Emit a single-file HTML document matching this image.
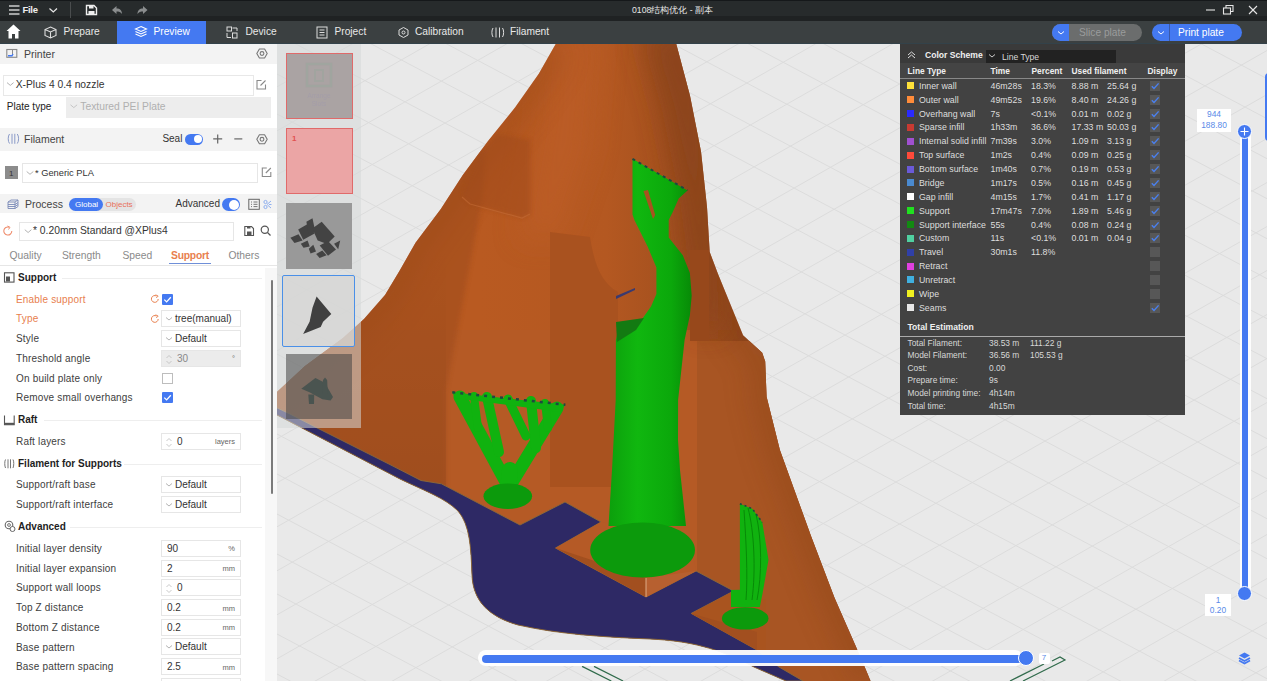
<!DOCTYPE html>
<html><head><meta charset="utf-8">
<style>
*{box-sizing:border-box;margin:0;padding:0}
html,body{width:1267px;height:681px;overflow:hidden;background:#e9e9e9;font-family:"Liberation Sans",sans-serif;}
.a{position:absolute}
#top{left:0;top:0;width:1267px;height:21px;background:linear-gradient(#15181a 0,#15181a 1px,#272b2c 1px,#272b2c 16px,#1f2223 16px)}
#nav{left:0;top:21px;width:1267px;height:23px;background:linear-gradient(#3b4041 0,#3b4041 22px,#33424a 22px)}
.nt{position:absolute;top:-1px;height:24px;line-height:24px;color:#e8e8e8;font-size:10.2px;white-space:nowrap}
#left{left:0;top:44px;width:277px;height:637px;background:#fff;overflow:hidden}
.hd{position:absolute;left:0;width:277px;background:#f3f3f3}
.t{position:absolute;white-space:nowrap;font-size:10px;color:#3a3a3a;line-height:12px}
.box{position:absolute;border:1px solid #e3e3e3;background:#fff}
.lbl{position:absolute;left:16px;white-space:nowrap;font-size:10px;color:#404040;line-height:12px;letter-spacing:0.18px;margin-top:0.7px}
.sh{position:absolute;left:18px;white-space:nowrap;font-size:10px;color:#1e1e1e;font-weight:bold;line-height:12px}
.inp{position:absolute;left:161px;width:80px;height:17px;border:1px solid #e6e6e6;background:#fff}
.inp span{position:absolute;top:2px;font-size:10px;color:#333;line-height:12px;white-space:nowrap}
.unit{position:absolute;right:5px;top:3.5px;font-size:7.5px;color:#666;line-height:9px}
</style></head><body>
<svg id="vp" class="a" style="left:0;top:0" width="1267" height="681" viewBox="0 0 1267 681">
<line x1="270" y1="-449.7" x2="1267" y2="78.7" stroke="#dcdcdc" stroke-width="1"/>
<line x1="270" y1="-409.7" x2="1267" y2="118.7" stroke="#dcdcdc" stroke-width="1"/>
<line x1="270" y1="-369.7" x2="1267" y2="158.7" stroke="#dcdcdc" stroke-width="1"/>
<line x1="270" y1="-329.7" x2="1267" y2="198.7" stroke="#dcdcdc" stroke-width="1"/>
<line x1="270" y1="-289.7" x2="1267" y2="238.7" stroke="#dcdcdc" stroke-width="1"/>
<line x1="270" y1="-249.7" x2="1267" y2="278.7" stroke="#dcdcdc" stroke-width="1"/>
<line x1="270" y1="-209.7" x2="1267" y2="318.7" stroke="#dcdcdc" stroke-width="1"/>
<line x1="270" y1="-169.7" x2="1267" y2="358.7" stroke="#dcdcdc" stroke-width="1"/>
<line x1="270" y1="-129.7" x2="1267" y2="398.7" stroke="#dcdcdc" stroke-width="1"/>
<line x1="270" y1="-89.7" x2="1267" y2="438.7" stroke="#dcdcdc" stroke-width="1"/>
<line x1="270" y1="-49.7" x2="1267" y2="478.7" stroke="#dcdcdc" stroke-width="1"/>
<line x1="270" y1="-9.7" x2="1267" y2="518.7" stroke="#dcdcdc" stroke-width="1"/>
<line x1="270" y1="30.3" x2="1267" y2="558.7" stroke="#dcdcdc" stroke-width="1"/>
<line x1="270" y1="70.3" x2="1267" y2="598.7" stroke="#dcdcdc" stroke-width="1"/>
<line x1="270" y1="110.3" x2="1267" y2="638.7" stroke="#dcdcdc" stroke-width="1"/>
<line x1="270" y1="150.3" x2="1267" y2="678.7" stroke="#dcdcdc" stroke-width="1"/>
<line x1="270" y1="190.3" x2="1267" y2="718.7" stroke="#dcdcdc" stroke-width="1"/>
<line x1="270" y1="230.3" x2="1267" y2="758.7" stroke="#dcdcdc" stroke-width="1"/>
<line x1="270" y1="270.3" x2="1267" y2="798.7" stroke="#dcdcdc" stroke-width="1"/>
<line x1="270" y1="310.3" x2="1267" y2="838.7" stroke="#dcdcdc" stroke-width="1"/>
<line x1="270" y1="350.3" x2="1267" y2="878.7" stroke="#dcdcdc" stroke-width="1"/>
<line x1="270" y1="390.3" x2="1267" y2="918.7" stroke="#dcdcdc" stroke-width="1"/>
<line x1="270" y1="430.3" x2="1267" y2="958.7" stroke="#dcdcdc" stroke-width="1"/>
<line x1="270" y1="470.3" x2="1267" y2="998.7" stroke="#dcdcdc" stroke-width="1"/>
<line x1="270" y1="510.3" x2="1267" y2="1038.7" stroke="#dcdcdc" stroke-width="1"/>
<line x1="270" y1="550.3" x2="1267" y2="1078.7" stroke="#dcdcdc" stroke-width="1"/>
<line x1="270" y1="590.3" x2="1267" y2="1118.7" stroke="#dcdcdc" stroke-width="1"/>
<line x1="270" y1="630.3" x2="1267" y2="1158.7" stroke="#dcdcdc" stroke-width="1"/>
<line x1="270" y1="670.3" x2="1267" y2="1198.7" stroke="#dcdcdc" stroke-width="1"/>
<line x1="270" y1="46.8" x2="1267" y2="-521.5" stroke="#dcdcdc" stroke-width="1"/>
<line x1="270" y1="90.8" x2="1267" y2="-477.5" stroke="#dcdcdc" stroke-width="1"/>
<line x1="270" y1="134.8" x2="1267" y2="-433.5" stroke="#dcdcdc" stroke-width="1"/>
<line x1="270" y1="178.8" x2="1267" y2="-389.5" stroke="#dcdcdc" stroke-width="1"/>
<line x1="270" y1="222.8" x2="1267" y2="-345.5" stroke="#dcdcdc" stroke-width="1"/>
<line x1="270" y1="266.8" x2="1267" y2="-301.5" stroke="#dcdcdc" stroke-width="1"/>
<line x1="270" y1="310.8" x2="1267" y2="-257.5" stroke="#dcdcdc" stroke-width="1"/>
<line x1="270" y1="354.8" x2="1267" y2="-213.5" stroke="#dcdcdc" stroke-width="1"/>
<line x1="270" y1="398.8" x2="1267" y2="-169.5" stroke="#dcdcdc" stroke-width="1"/>
<line x1="270" y1="442.8" x2="1267" y2="-125.5" stroke="#dcdcdc" stroke-width="1"/>
<line x1="270" y1="486.8" x2="1267" y2="-81.5" stroke="#dcdcdc" stroke-width="1"/>
<line x1="270" y1="530.8" x2="1267" y2="-37.5" stroke="#dcdcdc" stroke-width="1"/>
<line x1="270" y1="574.8" x2="1267" y2="6.5" stroke="#dcdcdc" stroke-width="1"/>
<line x1="270" y1="618.8" x2="1267" y2="50.5" stroke="#dcdcdc" stroke-width="1"/>
<line x1="270" y1="662.8" x2="1267" y2="94.5" stroke="#dcdcdc" stroke-width="1"/>
<line x1="270" y1="706.8" x2="1267" y2="138.5" stroke="#dcdcdc" stroke-width="1"/>
<line x1="270" y1="750.8" x2="1267" y2="182.5" stroke="#dcdcdc" stroke-width="1"/>
<line x1="270" y1="794.8" x2="1267" y2="226.5" stroke="#dcdcdc" stroke-width="1"/>
<line x1="270" y1="838.8" x2="1267" y2="270.5" stroke="#dcdcdc" stroke-width="1"/>
<line x1="270" y1="882.8" x2="1267" y2="314.5" stroke="#dcdcdc" stroke-width="1"/>
<line x1="270" y1="926.8" x2="1267" y2="358.5" stroke="#dcdcdc" stroke-width="1"/>
<line x1="270" y1="970.8" x2="1267" y2="402.5" stroke="#dcdcdc" stroke-width="1"/>
<line x1="270" y1="1014.8" x2="1267" y2="446.5" stroke="#dcdcdc" stroke-width="1"/>
<line x1="270" y1="1058.8" x2="1267" y2="490.5" stroke="#dcdcdc" stroke-width="1"/>
<line x1="270" y1="1102.8" x2="1267" y2="534.5" stroke="#dcdcdc" stroke-width="1"/>
<line x1="270" y1="1146.8" x2="1267" y2="578.5" stroke="#dcdcdc" stroke-width="1"/>
<line x1="270" y1="1190.8" x2="1267" y2="622.5" stroke="#dcdcdc" stroke-width="1"/>
<line x1="270" y1="1234.8" x2="1267" y2="666.5" stroke="#dcdcdc" stroke-width="1"/>
<defs><linearGradient id="og" gradientUnits="userSpaceOnUse" x1="480" y1="0" x2="760" y2="0"><stop offset="0" stop-color="#b95a21"/><stop offset="0.45" stop-color="#b45821"/><stop offset="1" stop-color="#8f461b"/></linearGradient>
<clipPath id="sil"><path d="M676.3,44 L690,95.8 L701,151.6 L707,207 L709.7,252 L718,274 L743.1,335.2 L762.2,352.8 L765.2,361.6 L766.6,396.8 L779.9,450 L811,536 L834.6,598 L855,644.4 L870.7,681 L870.7,681 L786,681 L754,667 C718,648 690,641 650,639 C600,637 558,634 518,625 C490,617 473,602 472,575 C471,548 470,525 458,511 C445,498 425,491 400,479 L277,415 L250,401 L250,390 L277,392 L305,366 L343,338 L364,319 L385,295 L400,270 L415.5,242.7 L440.8,209 L462.8,175 L488,141 L515,107.6 L538.8,73.8 L555.7,44 Z"/></clipPath><filter id="bl" x="-50%" y="-50%" width="200%" height="200%"><feGaussianBlur stdDeviation="14"/></filter><filter id="bl2" x="-50%" y="-50%" width="200%" height="200%"><feGaussianBlur stdDeviation="2"/></filter></defs>
<path d="M676.3,44 L690,95.8 L701,151.6 L707,207 L709.7,252 L718,274 L743.1,335.2 L762.2,352.8 L765.2,361.6 L766.6,396.8 L779.9,450 L811,536 L834.6,598 L855,644.4 L870.7,681 L870.7,681 L786,681 L754,667 C718,648 690,641 650,639 C600,637 558,634 518,625 C490,617 473,602 472,575 C471,548 470,525 458,511 C445,498 425,491 400,479 L277,415 L250,401 L250,390 L277,392 L305,366 L343,338 L364,319 L385,295 L400,270 L415.5,242.7 L440.8,209 L462.8,175 L488,141 L515,107.6 L538.8,73.8 L555.7,44 Z" fill="url(#og)"/>
<g clip-path="url(#sil)">
<path d="M200,330 L700,330 L700,681 L200,681 Z" fill="#b55a25"/>
<path d="M697,341 L767,341 L870,681 L697,681 Z" fill="#a85523"/>
<path d="M676.3,44 L690,95.8 L701,151.6 L707,207 L709.7,252 L718,274 L743.1,335.2 L762.2,352.8 L765.2,361.6 L766.6,396.8 L779.9,450 L811,536 L834.6,598 L855,644.4 L870.7,681" fill="none" stroke="#7e3c16" stroke-width="30" opacity="0.3" filter="url(#bl)"/>
<path d="M640,30 L700,30 L712,150 L720,330 L696,330 L680,200 L662,110 Z" fill="#8b441a" opacity="0.9" filter="url(#bl)"/>
<path d="M545,30 L600,30 L590,150 L560,240 L520,240 L540,120 Z" fill="#c0602a" opacity="0.5" filter="url(#bl)"/>
<path d="M555.7,44 L538.8,73.8 L515,107.6 L488,141 L462.8,175 L440.8,209 L415.5,242.7 L400,270 L385,295 L364,319 L343,338 L305,366 L277,392 L200,440" fill="none" stroke="#8a4218" stroke-width="30" opacity="0.3" filter="url(#bl)"/>
<defs><linearGradient id="lg" gradientUnits="userSpaceOnUse" x1="0" y1="250" x2="0" y2="484"><stop offset="0" stop-color="#8e4519" stop-opacity="0"/><stop offset="1" stop-color="#8e4519" stop-opacity="0.75"/></linearGradient></defs>
<path d="M250,250 L446,250 L446,490 L250,490 Z" fill="url(#lg)" opacity="0.5"/>
<path d="M486,150 L482,201 L446,391 L446,495 L240,495 L240,150 Z" fill="#9a4a1c" opacity="0.45" filter="url(#bl2)"/>
<path d="M462,195 C468,175 480,150 498,134 L530,140 L530,214 L522,218 L470,204 Z" fill="#a04c1c" opacity="0.55" filter="url(#bl2)"/>
<path d="M462,197 L470,204 L522,218 L530,214" fill="none" stroke="#c8703a" stroke-width="1.2" opacity="0.5"/>
<path d="M550,232 L590,237 C594,262 600,282 618,292 L618,487 L550,487 Z" fill="#a9521f"/>
<path d="M690,250 L709,250 L709,341 L690,341 Z" fill="#97481b"/>
</g>
<path d="M250,389 L277,415 L400,479 C425,491 445,498 458,511 C470,525 471,548 472,575 C473,602 490,617 518,625 C558,634 600,637 650,639 C690,641 718,648 754,667 L786,681 L803,681 L779,667 L757,650 L691.2,613.4 L733.6,591 L696,571 L646,597 L555.5,548 L601,522 L565,502 L520,525 L441.4,483.8 L421,480.5 L390,464.6 L316.4,427.6 L290,414 L250,395 Z" fill="#2e2965" stroke="#8a6a3a" stroke-width="0.9"/>
<path d="M555.5,548 L601,522 L690,540 L696,571 L646,597 Z" fill="#b55a26"/>
<path d="M691.2,613.4 L733.6,591 L766,600 L766,650 L757,650 Z" fill="#a9541f"/>
<path d="M555.5,548 L646,578 L646,597 Z" fill="#a24f1f"/><path d="M646,578 L696,571 L646,597 Z" fill="#b76030"/><path d="M646,578 L646,597" stroke="#e8c0a0" stroke-width="0.8"/>
<path d="M691.2,613.4 L757,632 L757,650 Z" fill="#a24f1f"/>
<defs><linearGradient id="cg" gradientUnits="userSpaceOnUse" x1="608" y1="0" x2="692" y2="0"><stop offset="0" stop-color="#0c9f0c"/><stop offset="0.35" stop-color="#10b70f"/><stop offset="0.75" stop-color="#0ba80b"/><stop offset="1" stop-color="#078a07"/></linearGradient></defs>
<path d="M632.5,158.8 L632.5,214.6 L634.4,220 L647.6,246.4 L656.4,267.6 L656.4,294 L651,306.4 L642.3,318.7 L617.6,332.8 L615.9,340 L615.7,399.9 L612,470 L608.5,526 L686,526 L680,470 L678,440 L678.1,399.9 L684.6,340 L689.9,315.2 L691.7,295.8 L689.9,272.9 L682.8,255.3 L668.7,237.6 L668.7,220 L672.9,211.7 L678.7,198.5 L687.5,190.4 Z" fill="url(#cg)"/>
<path d="M616,322 L644,318 L636,330 L617,342 Z" fill="#137a12"/>
<path d="M616,296 L635,288 L635,290 L616,299 Z" fill="#3a3a70"/>
<path d="M643.5,191 L648,190 L655.2,215 L653,219 Z" fill="#a8521f"/>
<path d="M632.5,158.8 L687.5,190.4" stroke="#1d4a40" stroke-width="2" stroke-dasharray="3,4"/>
<ellipse cx="642.6" cy="550" rx="52.4" ry="27.6" fill="#0c9a0c"/>
<g stroke="#10b20f" stroke-linecap="round" fill="none">
<path d="M506,482 L460,397" stroke-width="13"/>
<path d="M499,452 L487,397" stroke-width="10"/>
<path d="M478,428 L474,396" stroke-width="8"/>
<path d="M512,482 L557,408" stroke-width="13"/>
<path d="M536,448 L531,401" stroke-width="10"/>
<path d="M526,436 L508,399" stroke-width="9"/>
<path d="M548,428 L545,403" stroke-width="8"/>
<path d="M508,490 L510,470" stroke-width="16"/>
</g>
<path d="M452.3,392.3 L565.4,404.7 L560,412 L455,398 Z" fill="#10b20f"/>
<path d="M452.3,392.3 L565.4,404.7" stroke="#1d4a40" stroke-width="2.5" stroke-dasharray="3,5"/>
<ellipse cx="507.8" cy="496.2" rx="24.3" ry="12.8" fill="#0c9a0c"/>
<path d="M739.9,503.7 L752.3,508.7 L762.3,522.4 L768.5,559.8 L762.3,594.7 L759.8,607 L731,607 L731,590 L739.9,589.8 Z" fill="#10b20f"/>
<g fill="none" stroke="#078a07" stroke-width="1"><path d="M748,508 C754,530 756,570 752,600"/><path d="M756,514 C762,540 762,575 757,600"/><path d="M744,510 C746,540 748,575 746,600"/></g>
<path d="M739.9,503.7 L752.3,508.7 L762.3,522.4" stroke="#1d4a40" stroke-width="1.6" fill="none" stroke-dasharray="2,3"/>
<ellipse cx="745.2" cy="618.4" rx="23.3" ry="11.2" fill="#0c9a0c"/>
<g fill="none" stroke="#2f6a4a" stroke-width="1.2"><path d="M1010,681 L1044,664"/><path d="M582.1,666.4 L611.3,681"/><path d="M594,666.4 L623.1,681"/><path d="M1023,681 L1065,660 L1060,657 L1052,661"/></g>
</svg>

<div class="a" style="left:277px;top:44px;width:84px;height:384px;background:rgba(214,216,216,0.55)"></div>
<div class="a" style="left:285.5px;top:52.5px;width:67px;height:66px;background:rgba(166,158,158,0.93);border:1.3px solid #e06a6a"></div>
<svg class="a" style="left:285px;top:52px" width="68" height="67"><rect x="22" y="12" width="24" height="22" fill="none" stroke="#90a898" stroke-width="2.5" opacity=".35"/><rect x="30" y="18" width="8" height="11" fill="none" stroke="#90a898" stroke-width="2" opacity=".3"/></svg>
<div class="t" style="left:285px;top:92px;width:68px;text-align:center;font-size:6.5px;line-height:8px;color:#9a94b0;opacity:.4">Arrange<br>Slots</div>
<div class="a" style="left:285.5px;top:128px;width:67px;height:66px;background:#eba5a5;border:1.3px solid #e06a6a"></div>
<div class="t" style="left:292px;top:133px;font-size:8px;font-weight:bold;color:#e25050">1</div>
<div class="a" style="left:286px;top:203.3px;width:65.6px;height:65.6px;background:#999"></div>
<svg class="a" style="left:286px;top:203.3px" width="66" height="66"><g fill="#434343"><path d="M12.2,26.4 L22.6,20.6 L28.6,30.5 L17.2,36.8 Z"/><path d="M20.4,18.8 L26.5,15.2 L29.2,28.3 L22.4,31.5 Z"/><path d="M26.3,25.5 L35.7,18.7 L48.7,33.6 L41.1,41.1 L31.7,37.6 Z"/><path d="M4.4,34.7 L12.5,31.2 L16.6,37.4 L8.5,40.1 Z"/><path d="M14.8,40.8 L21.6,37.4 L23.7,43.5 L17.5,44.8 Z"/><path d="M22.8,45.8 L27.3,41.7 L30.0,48.5 L24.6,50.6 Z"/><path d="M33.7,42.4 L42.0,37.9 L50.0,46.4 L42.0,52.7 Z"/><path d="M30.1,50.9 L36.3,47.5 L40.6,52.2 L33.6,54.9 Z"/><path d="M48.1,40.8 L54.2,37.5 L52.2,46.2 Z"/></g></svg>
<div class="a" style="left:281.8px;top:274.6px;width:73.4px;height:72.6px;border:1.6px solid #4a90e8;border-radius:2px;background:rgba(214,214,212,0.75)"></div>
<svg class="a" style="left:281.8px;top:274.6px" width="74" height="73"><path d="M34.6,21.5 L49.3,39.1 L41.1,46.8 L38.7,52 L21.1,59.1 L27.6,46.8 L30.5,32.7 Z" fill="#404040"/></svg>
<div class="a" style="left:285.9px;top:354.1px;width:66px;height:65.2px;background:rgba(70,70,70,0.55)"></div>
<svg class="a" style="left:285.9px;top:354.1px" width="66" height="66"><g fill="#4a5450"><path d="M15.3,34.7 L29.4,24.1 L38.8,28.8 L47,42.9 L44.6,46.4 L36.4,45.3 L23.5,38.2 Z"/><path d="M37,26 L39,23.5 L41.1,26 L42,40.6 L36.4,40.6 Z"/><path d="M22.3,40.6 L28.2,40.6 L28,50 L23,50 Z"/></g></svg>
<div id="legend" class="a" style="left:900px;top:44px;width:285px;height:371px;background:#424242">
<div class="a" style="left:0;top:0;width:285px;height:19px;background:#3a3a3a"></div>
<svg class="a" style="left:6px;top:6px" width="12" height="10"><path d="M2 5 L5.5 2 L9 5 M2 8 L5.5 5 L9 8" fill="none" stroke="#ddd" stroke-width="1"/></svg>
<div class="t" style="left:25px;top:5px;font-size:8.6px;color:#f0f0f0;font-weight:bold;">Color Scheme</div>
<div class="a" style="left:86px;top:5.5px;width:130px;height:13px;background:#222"></div>
<svg class="a" style="left:88px;top:8px" width="8" height="8"><path d="M1 2.5 L4 5 L7 2.5" fill="none" stroke="#ddd" stroke-width="0.9"/></svg>
<div class="t" style="left:102px;top:6.5px;font-size:8.6px;color:#d8d8d8;">Line Type</div>
<div class="a" style="left:0;top:19px;width:285px;height:15px;background:#444"></div>
<div class="t" style="left:7.5px;top:21px;font-size:8.4px;color:#f0f0f0;font-weight:bold;">Line Type</div>
<div class="t" style="left:90.5px;top:21px;font-size:8.4px;color:#f0f0f0;font-weight:bold;">Time</div>
<div class="t" style="left:131.5px;top:21px;font-size:8.4px;color:#f0f0f0;font-weight:bold;">Percent</div>
<div class="t" style="left:171.5px;top:21px;font-size:8.4px;color:#f0f0f0;font-weight:bold;">Used filament</div>
<div class="t" style="left:247.5px;top:21px;font-size:8.4px;color:#f0f0f0;font-weight:bold;">Display</div>
<div class="a" style="left:0;top:34px;width:285px;height:1px;background:#888"></div>
<div class="a" style="left:7px;top:38.3px;width:7px;height:7px;background:#ffe13a"></div>
<div class="t" style="left:19px;top:35.8px;font-size:8.8px;color:#dedede;">Inner wall</div>
<div class="t" style="left:90.5px;top:35.8px;font-size:8.8px;color:#dedede;">46m28s</div>
<div class="t" style="left:131px;top:35.8px;font-size:8.8px;color:#dedede;">18.3%</div>
<div class="t" style="left:171.5px;top:35.8px;font-size:8.8px;color:#dedede;">8.88 m</div>
<div class="t" style="left:207px;top:35.8px;font-size:8.8px;color:#dedede;">25.64 g</div>
<div class="a" style="left:250px;top:36.8px;width:10px;height:10px;background:#575757"></div>
<svg class="a" style="left:250px;top:36.8px" width="10" height="10"><path d="M1.8 5.2 L4 7.4 L8.6 2.4" fill="none" stroke="#4a80f0" stroke-width="1.4"/></svg>
<div class="a" style="left:7px;top:52.17px;width:7px;height:7px;background:#ff8c3a"></div>
<div class="t" style="left:19px;top:49.67px;font-size:8.8px;color:#dedede;">Outer wall</div>
<div class="t" style="left:90.5px;top:49.67px;font-size:8.8px;color:#dedede;">49m52s</div>
<div class="t" style="left:131px;top:49.67px;font-size:8.8px;color:#dedede;">19.6%</div>
<div class="t" style="left:171.5px;top:49.67px;font-size:8.8px;color:#dedede;">8.40 m</div>
<div class="t" style="left:207px;top:49.67px;font-size:8.8px;color:#dedede;">24.26 g</div>
<div class="a" style="left:250px;top:50.67px;width:10px;height:10px;background:#575757"></div>
<svg class="a" style="left:250px;top:50.67px" width="10" height="10"><path d="M1.8 5.2 L4 7.4 L8.6 2.4" fill="none" stroke="#4a80f0" stroke-width="1.4"/></svg>
<div class="a" style="left:7px;top:66.03999999999999px;width:7px;height:7px;background:#2a2aff"></div>
<div class="t" style="left:19px;top:63.53999999999999px;font-size:8.8px;color:#dedede;">Overhang wall</div>
<div class="t" style="left:90.5px;top:63.53999999999999px;font-size:8.8px;color:#dedede;">7s</div>
<div class="t" style="left:131px;top:63.53999999999999px;font-size:8.8px;color:#dedede;">&lt;0.1%</div>
<div class="t" style="left:171.5px;top:63.53999999999999px;font-size:8.8px;color:#dedede;">0.01 m</div>
<div class="t" style="left:207px;top:63.53999999999999px;font-size:8.8px;color:#dedede;">0.02 g</div>
<div class="a" style="left:250px;top:64.53999999999999px;width:10px;height:10px;background:#575757"></div>
<svg class="a" style="left:250px;top:64.53999999999999px" width="10" height="10"><path d="M1.8 5.2 L4 7.4 L8.6 2.4" fill="none" stroke="#4a80f0" stroke-width="1.4"/></svg>
<div class="a" style="left:7px;top:79.91px;width:7px;height:7px;background:#c83a32"></div>
<div class="t" style="left:19px;top:77.41px;font-size:8.8px;color:#dedede;">Sparse infill</div>
<div class="t" style="left:90.5px;top:77.41px;font-size:8.8px;color:#dedede;">1h33m</div>
<div class="t" style="left:131px;top:77.41px;font-size:8.8px;color:#dedede;">36.6%</div>
<div class="t" style="left:171.5px;top:77.41px;font-size:8.8px;color:#dedede;">17.33 m</div>
<div class="t" style="left:207px;top:77.41px;font-size:8.8px;color:#dedede;">50.03 g</div>
<div class="a" style="left:250px;top:78.41px;width:10px;height:10px;background:#575757"></div>
<svg class="a" style="left:250px;top:78.41px" width="10" height="10"><path d="M1.8 5.2 L4 7.4 L8.6 2.4" fill="none" stroke="#4a80f0" stroke-width="1.4"/></svg>
<div class="a" style="left:7px;top:93.78px;width:7px;height:7px;background:#a050d0"></div>
<div class="t" style="left:19px;top:91.28px;font-size:8.8px;color:#dedede;">Internal solid infill</div>
<div class="t" style="left:90.5px;top:91.28px;font-size:8.8px;color:#dedede;">7m39s</div>
<div class="t" style="left:131px;top:91.28px;font-size:8.8px;color:#dedede;">3.0%</div>
<div class="t" style="left:171.5px;top:91.28px;font-size:8.8px;color:#dedede;">1.09 m</div>
<div class="t" style="left:207px;top:91.28px;font-size:8.8px;color:#dedede;">3.13 g</div>
<div class="a" style="left:250px;top:92.28px;width:10px;height:10px;background:#575757"></div>
<svg class="a" style="left:250px;top:92.28px" width="10" height="10"><path d="M1.8 5.2 L4 7.4 L8.6 2.4" fill="none" stroke="#4a80f0" stroke-width="1.4"/></svg>
<div class="a" style="left:7px;top:107.64999999999998px;width:7px;height:7px;background:#ff4a3a"></div>
<div class="t" style="left:19px;top:105.14999999999998px;font-size:8.8px;color:#dedede;">Top surface</div>
<div class="t" style="left:90.5px;top:105.14999999999998px;font-size:8.8px;color:#dedede;">1m2s</div>
<div class="t" style="left:131px;top:105.14999999999998px;font-size:8.8px;color:#dedede;">0.4%</div>
<div class="t" style="left:171.5px;top:105.14999999999998px;font-size:8.8px;color:#dedede;">0.09 m</div>
<div class="t" style="left:207px;top:105.14999999999998px;font-size:8.8px;color:#dedede;">0.25 g</div>
<div class="a" style="left:250px;top:106.14999999999998px;width:10px;height:10px;background:#575757"></div>
<svg class="a" style="left:250px;top:106.14999999999998px" width="10" height="10"><path d="M1.8 5.2 L4 7.4 L8.6 2.4" fill="none" stroke="#4a80f0" stroke-width="1.4"/></svg>
<div class="a" style="left:7px;top:121.51999999999998px;width:7px;height:7px;background:#6a5ad8"></div>
<div class="t" style="left:19px;top:119.01999999999998px;font-size:8.8px;color:#dedede;">Bottom surface</div>
<div class="t" style="left:90.5px;top:119.01999999999998px;font-size:8.8px;color:#dedede;">1m40s</div>
<div class="t" style="left:131px;top:119.01999999999998px;font-size:8.8px;color:#dedede;">0.7%</div>
<div class="t" style="left:171.5px;top:119.01999999999998px;font-size:8.8px;color:#dedede;">0.19 m</div>
<div class="t" style="left:207px;top:119.01999999999998px;font-size:8.8px;color:#dedede;">0.53 g</div>
<div class="a" style="left:250px;top:120.01999999999998px;width:10px;height:10px;background:#575757"></div>
<svg class="a" style="left:250px;top:120.01999999999998px" width="10" height="10"><path d="M1.8 5.2 L4 7.4 L8.6 2.4" fill="none" stroke="#4a80f0" stroke-width="1.4"/></svg>
<div class="a" style="left:7px;top:135.39px;width:7px;height:7px;background:#4a8ad0"></div>
<div class="t" style="left:19px;top:132.89px;font-size:8.8px;color:#dedede;">Bridge</div>
<div class="t" style="left:90.5px;top:132.89px;font-size:8.8px;color:#dedede;">1m17s</div>
<div class="t" style="left:131px;top:132.89px;font-size:8.8px;color:#dedede;">0.5%</div>
<div class="t" style="left:171.5px;top:132.89px;font-size:8.8px;color:#dedede;">0.16 m</div>
<div class="t" style="left:207px;top:132.89px;font-size:8.8px;color:#dedede;">0.45 g</div>
<div class="a" style="left:250px;top:133.89px;width:10px;height:10px;background:#575757"></div>
<svg class="a" style="left:250px;top:133.89px" width="10" height="10"><path d="M1.8 5.2 L4 7.4 L8.6 2.4" fill="none" stroke="#4a80f0" stroke-width="1.4"/></svg>
<div class="a" style="left:7px;top:149.26px;width:7px;height:7px;background:#ffffff"></div>
<div class="t" style="left:19px;top:146.76px;font-size:8.8px;color:#dedede;">Gap infill</div>
<div class="t" style="left:90.5px;top:146.76px;font-size:8.8px;color:#dedede;">4m15s</div>
<div class="t" style="left:131px;top:146.76px;font-size:8.8px;color:#dedede;">1.7%</div>
<div class="t" style="left:171.5px;top:146.76px;font-size:8.8px;color:#dedede;">0.41 m</div>
<div class="t" style="left:207px;top:146.76px;font-size:8.8px;color:#dedede;">1.17 g</div>
<div class="a" style="left:250px;top:147.76px;width:10px;height:10px;background:#575757"></div>
<svg class="a" style="left:250px;top:147.76px" width="10" height="10"><path d="M1.8 5.2 L4 7.4 L8.6 2.4" fill="none" stroke="#4a80f0" stroke-width="1.4"/></svg>
<div class="a" style="left:7px;top:163.13px;width:7px;height:7px;background:#20e020"></div>
<div class="t" style="left:19px;top:160.63px;font-size:8.8px;color:#dedede;">Support</div>
<div class="t" style="left:90.5px;top:160.63px;font-size:8.8px;color:#dedede;">17m47s</div>
<div class="t" style="left:131px;top:160.63px;font-size:8.8px;color:#dedede;">7.0%</div>
<div class="t" style="left:171.5px;top:160.63px;font-size:8.8px;color:#dedede;">1.89 m</div>
<div class="t" style="left:207px;top:160.63px;font-size:8.8px;color:#dedede;">5.46 g</div>
<div class="a" style="left:250px;top:161.63px;width:10px;height:10px;background:#575757"></div>
<svg class="a" style="left:250px;top:161.63px" width="10" height="10"><path d="M1.8 5.2 L4 7.4 L8.6 2.4" fill="none" stroke="#4a80f0" stroke-width="1.4"/></svg>
<div class="a" style="left:7px;top:177.0px;width:7px;height:7px;background:#128a12"></div>
<div class="t" style="left:19px;top:174.5px;font-size:8.8px;color:#dedede;">Support interface</div>
<div class="t" style="left:90.5px;top:174.5px;font-size:8.8px;color:#dedede;">55s</div>
<div class="t" style="left:131px;top:174.5px;font-size:8.8px;color:#dedede;">0.4%</div>
<div class="t" style="left:171.5px;top:174.5px;font-size:8.8px;color:#dedede;">0.08 m</div>
<div class="t" style="left:207px;top:174.5px;font-size:8.8px;color:#dedede;">0.24 g</div>
<div class="a" style="left:250px;top:175.5px;width:10px;height:10px;background:#575757"></div>
<svg class="a" style="left:250px;top:175.5px" width="10" height="10"><path d="M1.8 5.2 L4 7.4 L8.6 2.4" fill="none" stroke="#4a80f0" stroke-width="1.4"/></svg>
<div class="a" style="left:7px;top:190.87px;width:7px;height:7px;background:#50d0a0"></div>
<div class="t" style="left:19px;top:188.37px;font-size:8.8px;color:#dedede;">Custom</div>
<div class="t" style="left:90.5px;top:188.37px;font-size:8.8px;color:#dedede;">11s</div>
<div class="t" style="left:131px;top:188.37px;font-size:8.8px;color:#dedede;">&lt;0.1%</div>
<div class="t" style="left:171.5px;top:188.37px;font-size:8.8px;color:#dedede;">0.01 m</div>
<div class="t" style="left:207px;top:188.37px;font-size:8.8px;color:#dedede;">0.04 g</div>
<div class="a" style="left:250px;top:189.37px;width:10px;height:10px;background:#575757"></div>
<svg class="a" style="left:250px;top:189.37px" width="10" height="10"><path d="M1.8 5.2 L4 7.4 L8.6 2.4" fill="none" stroke="#4a80f0" stroke-width="1.4"/></svg>
<div class="a" style="left:7px;top:204.74px;width:7px;height:7px;background:#3040a8"></div>
<div class="t" style="left:19px;top:202.24px;font-size:8.8px;color:#dedede;">Travel</div>
<div class="t" style="left:90.5px;top:202.24px;font-size:8.8px;color:#dedede;">30m1s</div>
<div class="t" style="left:131px;top:202.24px;font-size:8.8px;color:#dedede;">11.8%</div>
<div class="a" style="left:250px;top:203.24px;width:10px;height:10px;background:#575757"></div>
<div class="a" style="left:7px;top:218.61px;width:7px;height:7px;background:#e040e0"></div>
<div class="t" style="left:19px;top:216.11px;font-size:8.8px;color:#dedede;">Retract</div>
<div class="a" style="left:250px;top:217.11px;width:10px;height:10px;background:#575757"></div>
<div class="a" style="left:7px;top:232.47999999999996px;width:7px;height:7px;background:#40b0e0"></div>
<div class="t" style="left:19px;top:229.97999999999996px;font-size:8.8px;color:#dedede;">Unretract</div>
<div class="a" style="left:250px;top:230.97999999999996px;width:10px;height:10px;background:#575757"></div>
<div class="a" style="left:7px;top:246.34999999999997px;width:7px;height:7px;background:#f0f020"></div>
<div class="t" style="left:19px;top:243.84999999999997px;font-size:8.8px;color:#dedede;">Wipe</div>
<div class="a" style="left:250px;top:244.84999999999997px;width:10px;height:10px;background:#575757"></div>
<div class="a" style="left:7px;top:260.21999999999997px;width:7px;height:7px;background:#e8e8e8"></div>
<div class="t" style="left:19px;top:257.71999999999997px;font-size:8.8px;color:#dedede;">Seams</div>
<div class="a" style="left:250px;top:258.71999999999997px;width:10px;height:10px;background:#575757"></div>
<svg class="a" style="left:250px;top:258.71999999999997px" width="10" height="10"><path d="M1.8 5.2 L4 7.4 L8.6 2.4" fill="none" stroke="#4a80f0" stroke-width="1.4"/></svg>
<div class="t" style="left:7.5px;top:277px;font-size:8.6px;color:#f0f0f0;font-weight:bold;">Total Estimation</div>
<div class="a" style="left:0;top:291.5px;width:285px;height:1px;background:#aaa"></div>
<div class="t" style="left:7.5px;top:292.5px;font-size:8.4px;color:#d8d8d8;">Total Filament:</div>
<div class="t" style="left:89px;top:292.5px;font-size:8.4px;color:#d8d8d8;">38.53 m</div>
<div class="t" style="left:130px;top:292.5px;font-size:8.4px;color:#d8d8d8;">111.22 g</div>
<div class="t" style="left:7.5px;top:305.1px;font-size:8.4px;color:#d8d8d8;">Model Filament:</div>
<div class="t" style="left:89px;top:305.1px;font-size:8.4px;color:#d8d8d8;">36.56 m</div>
<div class="t" style="left:130px;top:305.1px;font-size:8.4px;color:#d8d8d8;">105.53 g</div>
<div class="t" style="left:7.5px;top:317.7px;font-size:8.4px;color:#d8d8d8;">Cost:</div>
<div class="t" style="left:89px;top:317.7px;font-size:8.4px;color:#d8d8d8;">0.00</div>
<div class="t" style="left:7.5px;top:330.3px;font-size:8.4px;color:#d8d8d8;">Prepare time:</div>
<div class="t" style="left:89px;top:330.3px;font-size:8.4px;color:#d8d8d8;">9s</div>
<div class="t" style="left:7.5px;top:342.9px;font-size:8.4px;color:#d8d8d8;">Model printing time:</div>
<div class="t" style="left:89px;top:342.9px;font-size:8.4px;color:#d8d8d8;">4h14m</div>
<div class="t" style="left:7.5px;top:355.5px;font-size:8.4px;color:#d8d8d8;">Total time:</div>
<div class="t" style="left:89px;top:355.5px;font-size:8.4px;color:#d8d8d8;">4h15m</div>
</div>
<div class="a" style="left:1265px;top:73px;width:8px;height:68px;border-radius:4px;background:#4479f1"></div>
<div class="a" style="left:1239.5px;top:128px;width:11px;height:470px;background:#fff;border-radius:5px;opacity:.9"></div>
<div class="a" style="left:1241.5px;top:131px;width:6px;height:462px;background:#4479f1"></div>
<div class="a" style="left:1237px;top:124px;width:15px;height:15px;border-radius:8px;background:#4479f1;border:1px solid #fff"></div>
<svg class="a" style="left:1237px;top:124px" width="15" height="15"><path d="M7.5 3.5 V11.5 M3.5 7.5 H11.5" stroke="#fff" stroke-width="1.1"/></svg>
<div class="a" style="left:1237px;top:586px;width:15px;height:15px;border-radius:8px;background:#4479f1;border:1px solid #fff"></div>
<div class="a" style="left:1197px;top:108.5px;width:34px;height:23px;background:#fff"></div>
<div class="t" style="left:1197px;top:109px;width:34px;text-align:center;font-size:8.4px;line-height:10.5px;color:#5a8ae8">944<br>188.80</div>
<div class="a" style="left:1205px;top:594px;width:26px;height:22px;background:#fff"></div>
<div class="t" style="left:1205px;top:594.5px;width:26px;text-align:center;font-size:8.4px;line-height:10.5px;color:#5a8ae8">1<br>0.20</div>
<svg class="a" style="left:1237px;top:651px" width="15" height="15"><path d="M7.5 1.5 L13 4.5 L7.5 7.5 L2 4.5 Z" fill="#4479f1"/><path d="M2 7 L7.5 10 L13 7" fill="none" stroke="#4479f1" stroke-width="1.8"/><path d="M2 9.5 L7.5 12.5 L13 9.5" fill="none" stroke="#4479f1" stroke-width="1.8"/></svg>
<div class="a" style="left:478px;top:649.5px;width:545px;height:16.5px;border-radius:8px;background:#fff;opacity:.95"></div>
<div class="a" style="left:482px;top:654.5px;width:540px;height:8px;border-radius:4px;background:#4479f1"></div>
<div class="a" style="left:1017.5px;top:650px;width:16px;height:16px;border-radius:8px;background:#4479f1;border:1.2px solid #fff"></div>
<div class="a" style="left:1038.5px;top:653px;width:11px;height:11px;background:#fff;border-radius:2px"></div>
<div class="t" style="left:1038.5px;top:653px;width:11px;text-align:center;font-size:8px;line-height:10px;color:#5a8ae8">7</div>
<div id="top" class="a">
<svg class="a" style="left:0;top:0" width="1267" height="20">
<g stroke="#e6e6e6" stroke-width="1.3"><line x1="9" y1="6" x2="19.5" y2="6"/><line x1="9" y1="10" x2="19.5" y2="10"/><line x1="9" y1="14" x2="19.5" y2="14"/></g>
<path d="M49.5 8.5 L53.3 12 L57 8.5" fill="none" stroke="#e6e6e6" stroke-width="1.2"/>
<line x1="70.5" y1="2" x2="70.5" y2="18" stroke="#4a4d4e" stroke-width="1"/>
<path d="M86.5 5.5 H94 L96.5 8 V14.5 H86.5 Z" fill="none" stroke="#eee" stroke-width="1.4"/>
<rect x="89" y="5.5" width="4.5" height="3" fill="#eee"/><rect x="88.5" y="11" width="6" height="3.5" fill="#eee"/>
<path d="M112 10 L116.5 6 V8.5 C120 8.5 122 10.5 122 14 C120.5 12 119 11.5 116.5 11.5 V14 Z" fill="#8a8d8e"/>
<path d="M147.5 10 L143 6 V8.5 C139.5 8.5 137.5 10.5 137.5 14 C139 12 140.5 11.5 143 11.5 V14 Z" fill="#8a8d8e"/>
<g stroke="#e6e6e6" stroke-width="1.1" fill="none"><line x1="1206" y1="10" x2="1215" y2="10"/>
<rect x="1223.5" y="8" width="7" height="6"/><path d="M1226 8 V5.5 H1233 V11.5 H1230.5"/>
<line x1="1249" y1="6" x2="1257" y2="14"/><line x1="1257" y1="6" x2="1249" y2="14"/></g>
</svg>
<div class="t" style="left:22.5px;top:4px;color:#eee;font-size:9.5px;font-weight:bold;letter-spacing:-0.3px">File</div>
<div class="t" style="left:632px;top:4px;color:#e6e6e6;font-size:8.7px">0108结构优化 - 副本</div>
</div>
<div id="nav" class="a">
<div class="a" style="left:116.5px;top:0;width:89.5px;height:23px;background:#4479f1"></div>
<svg class="a" style="left:0;top:-1px" width="600" height="24">
<path d="M13.5 4.5 L20.5 11 H18.5 V18.5 H15 V14 H12 V18.5 H8.5 V11 H6.5 Z" fill="#fff"/>
<g fill="none" stroke="#ddd" stroke-width="1.1">
<path d="M50.5 7 L56 9.5 V15.5 L50.5 18 L45 15.5 V9.5 Z M45 9.5 L50.5 12 L56 9.5 M50.5 12 V18"/>
</g>
<g fill="none" stroke="#fff" stroke-width="1.1">
<path d="M141 6.5 L146.5 9 L141 11.5 L135.5 9 Z"/><path d="M135.5 11.5 L141 14 L146.5 11.5"/><path d="M135.5 14 L141 16.5 L146.5 14"/>
</g>
<g fill="none" stroke="#ddd" stroke-width="1">
<rect x="227" y="7" width="4.5" height="4"/><rect x="232.5" y="13" width="4.5" height="5"/><path d="M232.5 8 H237 V11 M227 13 V17.5 H231"/>
<rect x="317" y="7" width="10" height="11"/><path d="M319.5 10 H324.5 M319.5 12.5 H324.5 M319.5 15 H324.5"/>
<path d="M403.5 7.5 L408 10 V15 L403.5 17.5 L399 15 V10 Z"/><circle cx="403.5" cy="12.5" r="1.5"/>
<path d="M493 8 C491.5 10 491.5 15 493 17 M496 7.5 V17.5 M499.5 7.5 V17.5 M502.5 8 C504 10 504 15 502.5 17"/>
</g>
</svg>
<div class="nt" style="left:63.5px">Prepare</div>
<div class="nt" style="left:153.5px;color:#fff">Preview</div>
<div class="nt" style="left:245.5px">Device</div>
<div class="nt" style="left:334.5px">Project</div>
<div class="nt" style="left:415px">Calibration</div>
<div class="nt" style="left:510px">Filament</div>
<div class="a" style="left:1052px;top:3px;width:90px;height:17px;border-radius:9px;background:#6b6d6d;overflow:hidden"><div class="a" style="left:0;top:0;width:17px;height:17px;background:#4479f1"></div></div>
<div class="a" style="left:1152px;top:3px;width:90px;height:17px;border-radius:9px;background:#4479f1;overflow:hidden"><div class="a" style="left:17px;top:0;width:1px;height:17px;background:#3a5aa8"></div></div>
<svg class="a" style="left:1040px;top:-1px" width="227" height="24"><g fill="none" stroke="#fff" stroke-width="1"><path d="M1058 11.5 L1061 14 L1064 11.5" transform="translate(-1040,0)"/><path d="M1158 11.5 L1161 14 L1164 11.5" transform="translate(-1040,0)"/></g></svg>
<div class="nt" style="left:1079px;top:0px;color:#9a9c9c;font-size:10.2px">Slice plate</div>
<div class="nt" style="left:1178px;top:0px;color:#fff;font-size:10.2px">Print plate</div>
</div>
<div id="left" class="a">
<div class="hd" style="top:0;height:20px"></div>
<div class="hd" style="top:83.5px;height:23px"></div>
<div class="hd" style="top:150px;height:19px"></div>
<div class="t" style="left:24px;top:3.5px;font-size:10.5px;color:#444">Printer</div>
<div class="box" style="left:2.5px;top:30.5px;width:251px;height:21px;border-color:#e8e8e8"></div>
<div class="t" style="left:15.7px;top:35px;font-size:10.3px;color:#333">X-Plus 4 0.4 nozzle</div>
<div class="t" style="left:6.8px;top:57.3px;font-size:10px;color:#222">Plate type</div>
<div class="a" style="left:66px;top:53px;width:205px;height:21px;background:#ededed"></div>
<div class="t" style="left:80.3px;top:57.3px;font-size:10.3px;color:#b0b0b0">Textured PEI Plate</div>
<div class="t" style="left:24px;top:89px;font-size:10.5px;color:#444">Filament</div>
<div class="t" style="left:162.4px;top:89px;font-size:10px;color:#333">Seal</div>
<div class="a" style="left:185px;top:89.80000000000001px;width:18px;height:11px;border-radius:6px;background:#4479f1"><div class="a" style="left:8.5px;top:1.5px;width:8px;height:8px;border-radius:4px;background:#fff"></div></div>
<div class="a" style="left:5px;top:122.4px;width:13px;height:13px;background:#8c8c8c"></div>
<div class="t" style="left:9px;top:123.69999999999999px;font-size:8px;color:#333">1</div>
<div class="box" style="left:22px;top:119px;width:236px;height:19.5px;border-color:#e6e6e6"></div>
<div class="t" style="left:35px;top:122.69999999999999px;font-size:9.3px;color:#333">* Generic PLA</div>
<div class="t" style="left:25px;top:153.8px;font-size:10.5px;color:#444">Process</div>
<div class="a" style="left:69.4px;top:154px;width:67px;height:13px;border-radius:7px;background:#e4e4e4"><div class="a" style="left:0;top:0;width:34px;height:13px;border-radius:7px;background:#4479f1"></div></div>
<div class="t" style="left:75px;top:155.5px;font-size:8px;color:#fff;line-height:10px">Global</div>
<div class="t" style="left:105.5px;top:155.5px;font-size:8px;color:#e8705a;line-height:10px">Objects</div>
<div class="t" style="left:175.5px;top:153.8px;font-size:10px;color:#333">Advanced</div>
<div class="a" style="left:221.7px;top:154px;width:18.5px;height:13px;border-radius:7px;background:#4479f1"><div class="a" style="left:7.5px;top:1.5px;width:10px;height:10px;border-radius:5px;background:#fff"></div></div>
<div class="box" style="left:19.4px;top:177.5px;width:214.5px;height:19px;border-color:#e6e6e6"></div>
<div class="t" style="left:33px;top:180.8px;font-size:10.3px;color:#333">* 0.20mm Standard @XPlus4</div>
<div class="t" style="left:9.6px;top:206px;font-size:10.3px;color:#8a8a8a">Quality</div>
<div class="t" style="left:61.9px;top:206px;font-size:10.3px;color:#8a8a8a">Strength</div>
<div class="t" style="left:122.5px;top:206px;font-size:10.3px;color:#8a8a8a">Speed</div>
<div class="t" style="left:171px;top:206px;font-size:10.3px;color:#e8804e;font-weight:bold;letter-spacing:-0.2px">Support</div>
<div class="t" style="left:228.5px;top:206px;font-size:10.3px;color:#8a8a8a">Others</div>
<div class="a" style="left:0;top:220.5px;width:277px;height:1px;background:#e6e6e6"></div>
<div class="a" style="left:169px;top:218.5px;width:42px;height:1.2px;background:#6f8fd8"></div>
<div class="sh" style="left:18px;top:227.5px">Support</div>
<div class="sh" style="left:18px;top:370.3px">Raft</div>
<div class="sh" style="left:18px;top:413.6px">Filament for Supports</div>
<div class="sh" style="left:18px;top:476.70000000000005px">Advanced</div>
<div class="a" style="left:62px;top:233.5px;width:200px;height:1px;background:#eeeeee"></div>
<div class="a" style="left:44px;top:376.3px;width:218px;height:1px;background:#eeeeee"></div>
<div class="a" style="left:124px;top:419.6px;width:138px;height:1px;background:#eeeeee"></div>
<div class="a" style="left:70px;top:482.70000000000005px;width:192px;height:1px;background:#eeeeee"></div>
<div class="lbl" style="top:249px;color:#e8804e">Enable support</div>
<div class="a" style="left:162px;top:249.5px;width:11px;height:11px;background:#4479f1;border-radius:1px"><svg class="a" style="left:0;top:0" width="11" height="11"><path d="M2.3 5.6 L4.6 7.9 L8.8 3.2" fill="none" stroke="#fff" stroke-width="1.3"/></svg></div>
<div class="lbl" style="top:268.8px;color:#e8804e">Type</div>
<div class="inp" style="top:266.3px;background:#fff">
<svg class="a" style="left:3px;top:5px" width="8" height="6"><path d="M1 1.5 L4 4 L7 1.5" fill="none" stroke="#aaa" stroke-width="0.9"/></svg><span style="left:13px">tree(manual)</span>
</div>
<div class="lbl" style="top:288.3px;color:#404040">Style</div>
<div class="inp" style="top:285.8px;background:#fff">
<svg class="a" style="left:3px;top:5px" width="8" height="6"><path d="M1 1.5 L4 4 L7 1.5" fill="none" stroke="#aaa" stroke-width="0.9"/></svg><span style="left:13px">Default</span>
</div>
<div class="lbl" style="top:308px;color:#404040">Threshold angle</div>
<div class="inp" style="top:305.5px;background:#ececec">
<svg class="a" style="left:3px;top:2px" width="8" height="13"><path d="M1.5 5 L4 2.5 L6.5 5 M1.5 8 L4 10.5 L6.5 8" fill="none" stroke="#bbb" stroke-width="0.8"/></svg><span style="left:15px;color:#888">30</span>
<div class="unit">°</div>
</div>
<div class="lbl" style="top:328px;color:#404040">On build plate only</div>
<div class="a" style="left:162px;top:328.5px;width:11px;height:11px;border:1px solid #bdbdbd;background:#fff"></div>
<div class="lbl" style="top:347.7px;color:#404040">Remove small overhangs</div>
<div class="a" style="left:162px;top:348.2px;width:11px;height:11px;background:#4479f1;border-radius:1px"><svg class="a" style="left:0;top:0" width="11" height="11"><path d="M2.3 5.6 L4.6 7.9 L8.8 3.2" fill="none" stroke="#fff" stroke-width="1.3"/></svg></div>
<div class="lbl" style="top:391.4px;color:#404040">Raft layers</div>
<div class="inp" style="top:388.9px;background:#fff">
<svg class="a" style="left:3px;top:2px" width="8" height="13"><path d="M1.5 5 L4 2.5 L6.5 5 M1.5 8 L4 10.5 L6.5 8" fill="none" stroke="#bbb" stroke-width="0.8"/></svg><span style="left:15px;color:#333">0</span>
<div class="unit">layers</div>
</div>
<div class="lbl" style="top:434.6px;color:#404040">Support/raft base</div>
<div class="inp" style="top:432.1px;background:#fff">
<svg class="a" style="left:3px;top:5px" width="8" height="6"><path d="M1 1.5 L4 4 L7 1.5" fill="none" stroke="#aaa" stroke-width="0.9"/></svg><span style="left:13px">Default</span>
</div>
<div class="lbl" style="top:454.3px;color:#404040">Support/raft interface</div>
<div class="inp" style="top:451.8px;background:#fff">
<svg class="a" style="left:3px;top:5px" width="8" height="6"><path d="M1 1.5 L4 4 L7 1.5" fill="none" stroke="#aaa" stroke-width="0.9"/></svg><span style="left:13px">Default</span>
</div>
<div class="lbl" style="top:498.4px;color:#404040">Initial layer density</div>
<div class="inp" style="top:495.9px;background:#fff">
<span style="left:5px">90</span>
<div class="unit">%</div>
</div>
<div class="lbl" style="top:518px;color:#404040">Initial layer expansion</div>
<div class="inp" style="top:515.5px;background:#fff">
<span style="left:5px">2</span>
<div class="unit">mm</div>
</div>
<div class="lbl" style="top:537.8px;color:#404040">Support wall loops</div>
<div class="inp" style="top:535.3px;background:#fff">
<svg class="a" style="left:3px;top:2px" width="8" height="13"><path d="M1.5 5 L4 2.5 L6.5 5 M1.5 8 L4 10.5 L6.5 8" fill="none" stroke="#bbb" stroke-width="0.8"/></svg><span style="left:15px;color:#333">0</span>
</div>
<div class="lbl" style="top:557.5px;color:#404040">Top Z distance</div>
<div class="inp" style="top:555.0px;background:#fff">
<span style="left:5px">0.2</span>
<div class="unit">mm</div>
</div>
<div class="lbl" style="top:577.2px;color:#404040">Bottom Z distance</div>
<div class="inp" style="top:574.7px;background:#fff">
<span style="left:5px">0.2</span>
<div class="unit">mm</div>
</div>
<div class="lbl" style="top:596.9px;color:#404040">Base pattern</div>
<div class="inp" style="top:594.4px;background:#fff">
<svg class="a" style="left:3px;top:5px" width="8" height="6"><path d="M1 1.5 L4 4 L7 1.5" fill="none" stroke="#aaa" stroke-width="0.9"/></svg><span style="left:13px">Default</span>
</div>
<div class="lbl" style="top:616.6px;color:#404040">Base pattern spacing</div>
<div class="inp" style="top:614.1px;background:#fff">
<span style="left:5px">2.5</span>
<div class="unit">mm</div>
</div>
<div class="lbl" style="top:636.3px;color:#404040">Pattern angle</div>
<div class="inp" style="top:633.8px;background:#fff">
<span style="left:5px">0</span>
<div class="unit">°</div>
</div>
<svg class="a" style="left:150px;top:250px" width="10" height="10"><path d="M8.2 5 A3.4 3.4 0 1 1 6.5 2" fill="none" stroke="#e8804e" stroke-width="1"/><path d="M5.5 0.8 L8.2 2 L6.2 4" fill="none" stroke="#e8804e" stroke-width="0.9"/></svg>
<svg class="a" style="left:150px;top:269.8px" width="10" height="10"><path d="M8.2 5 A3.4 3.4 0 1 1 6.5 2" fill="none" stroke="#e8804e" stroke-width="1"/><path d="M5.5 0.8 L8.2 2 L6.2 4" fill="none" stroke="#e8804e" stroke-width="0.9"/></svg>
<div class="a" style="left:265px;top:224px;width:12px;height:420px;background:#f7f7f7"></div>
<div class="a" style="left:270.5px;top:236px;width:2px;height:214px;background:#7a7a7a;border-radius:1px"></div>
<svg class="a" style="left:0;top:0" width="277" height="637" viewBox="0 44 277 637">
<rect x="6.8" y="49.5" width="10" height="7.8" fill="none" stroke="#8a8a8a" stroke-width="1.1"/><line x1="12.5" y1="49.5" x2="12.5" y2="55" stroke="#8a8a8a" stroke-width="1"/><path d="M8 55.8 H12 L13 54" stroke="#4479f1" stroke-width="1.4" fill="none"/>
<path d="M267.20,53.50 L264.60,58.00 L259.40,58.00 L256.80,53.50 L259.40,49.00 L264.60,49.00 Z" fill="none" stroke="#777" stroke-width="1.1" stroke-linejoin="round"/><circle cx="262" cy="53.5" r="1.9" fill="none" stroke="#777" stroke-width="1.1"/>
<path d="M267.20,139.30 L264.60,143.80 L259.40,143.80 L256.80,139.30 L259.40,134.80 L264.60,134.80 Z" fill="none" stroke="#777" stroke-width="1.1" stroke-linejoin="round"/><circle cx="262" cy="139.3" r="1.9" fill="none" stroke="#777" stroke-width="1.1"/>
<path d="M261.5,80.5 H257 V89.0 H265.5 V84.5" fill="none" stroke="#8a8a8a" stroke-width="1.1"/><path d="M260.5,85.5 L265.5,80.5" stroke="#8a8a8a" stroke-width="1.1"/>
<path d="M266.8,168 H262.3 V176.5 H270.8 V172" fill="none" stroke="#8a8a8a" stroke-width="1.1"/><path d="M265.8,173 L270.8,168" stroke="#8a8a8a" stroke-width="1.1"/>
<path d="M7,82.6 L10.3,85.39999999999999 L13.6,82.6" fill="none" stroke="#aaa" stroke-width="0.9"/>
<path d="M70.5,104.8 L73.8,107.6 L77.1,104.8" fill="none" stroke="#c0c0c0" stroke-width="0.9"/>
<path d="M26.7,171.5 L30.0,174.3 L33.3,171.5" fill="none" stroke="#aaa" stroke-width="0.9"/>
<path d="M24.8,229.7 L28.1,232.5 L31.4,229.7" fill="none" stroke="#aaa" stroke-width="0.9"/>
<path d="M9.5,134 C7.8,136 7.8,141.5 9.5,143.5 M12,133.8 V143.8 M14.8,133.8 V143.8 M17.3,134 C19,136 19,141.5 17.3,143.5" fill="none" stroke="#8a9ac8" stroke-width="1"/>
<path d="M213.2,138.9 H222.2 M217.7,134.4 V143.4" stroke="#666" stroke-width="1.2"/><path d="M234.3,138.9 H242.3" stroke="#666" stroke-width="1.2"/>
<path d="M8,202 L11,200 H18 L15,202 Z" fill="none" stroke="#7a8ab8" stroke-width="0.9"/><path d="M8,202 V208.5 H15 L18,206.5 V200 M8,204.5 H15 L18,202.5 M8,206.5 H15 L18,204.5 M15,202 V208.5" fill="none" stroke="#7a8ab8" stroke-width="0.9"/>
<rect x="248.8" y="199.3" width="10.5" height="10" fill="none" stroke="#666" stroke-width="1"/><path d="M251,202 H252 M253.5,202 H257.5 M251,204.3 H252 M253.5,204.3 H257.5 M251,206.6 H252 M253.5,206.6 H257.5" stroke="#666" stroke-width="0.9"/>
<g fill="none" stroke="#8fb0f0" stroke-width="1"><circle cx="265.5" cy="202" r="1.6"/><circle cx="265.5" cy="207" r="1.6"/><path d="M267,204.5 L271,201 M267.5,205 L271,208 M269,204.5 H271.5"/></g>
<path d="M11.8,231 A4,4 0 1 1 9,227.2" fill="none" stroke="#ef8f70" stroke-width="1.1"/><path d="M7.5,226 L10,227.3 L8.5,229.5" fill="none" stroke="#ef8f70" stroke-width="1"/>
<path d="M244.8,226.5 H251.5 L253.5,228.5 V235.5 H244.8 Z" fill="none" stroke="#555" stroke-width="1.1"/><rect x="247" y="231.5" width="4.5" height="4" fill="#555"/><rect x="247" y="226.5" width="3.5" height="2" fill="#555"/>
<circle cx="264.8" cy="229.8" r="3.6" fill="none" stroke="#555" stroke-width="1.2"/><path d="M267.5,232.5 L270.5,235.5" stroke="#555" stroke-width="1.3"/>
<rect x="4.5" y="272.8" width="9.5" height="9.3" fill="none" stroke="#555" stroke-width="1.1"/><rect x="6" y="276.5" width="4" height="5" fill="#555"/>
<path d="M4.5,415.5 V424.8 H14.2 V415.5" fill="none" stroke="#555" stroke-width="1.1"/><rect x="4.5" y="422.8" width="9.7" height="2" fill="#555"/>
<path d="M5.5,459.5 C4.5,461 4.5,466 5.5,468 M8,459.3 V468.3 M10.5,459.3 V468.3 M13,459.5 C14,461 14,466 13,468" fill="none" stroke="#777" stroke-width="1"/>
<circle cx="9" cy="525" r="3.8" fill="none" stroke="#666" stroke-width="1.1"/><circle cx="9" cy="525" r="1.4" fill="none" stroke="#666" stroke-width="0.9"/><circle cx="12.5" cy="529" r="2.5" fill="#fff" stroke="#666" stroke-width="1"/>
</svg>
</div>
</body></html>
